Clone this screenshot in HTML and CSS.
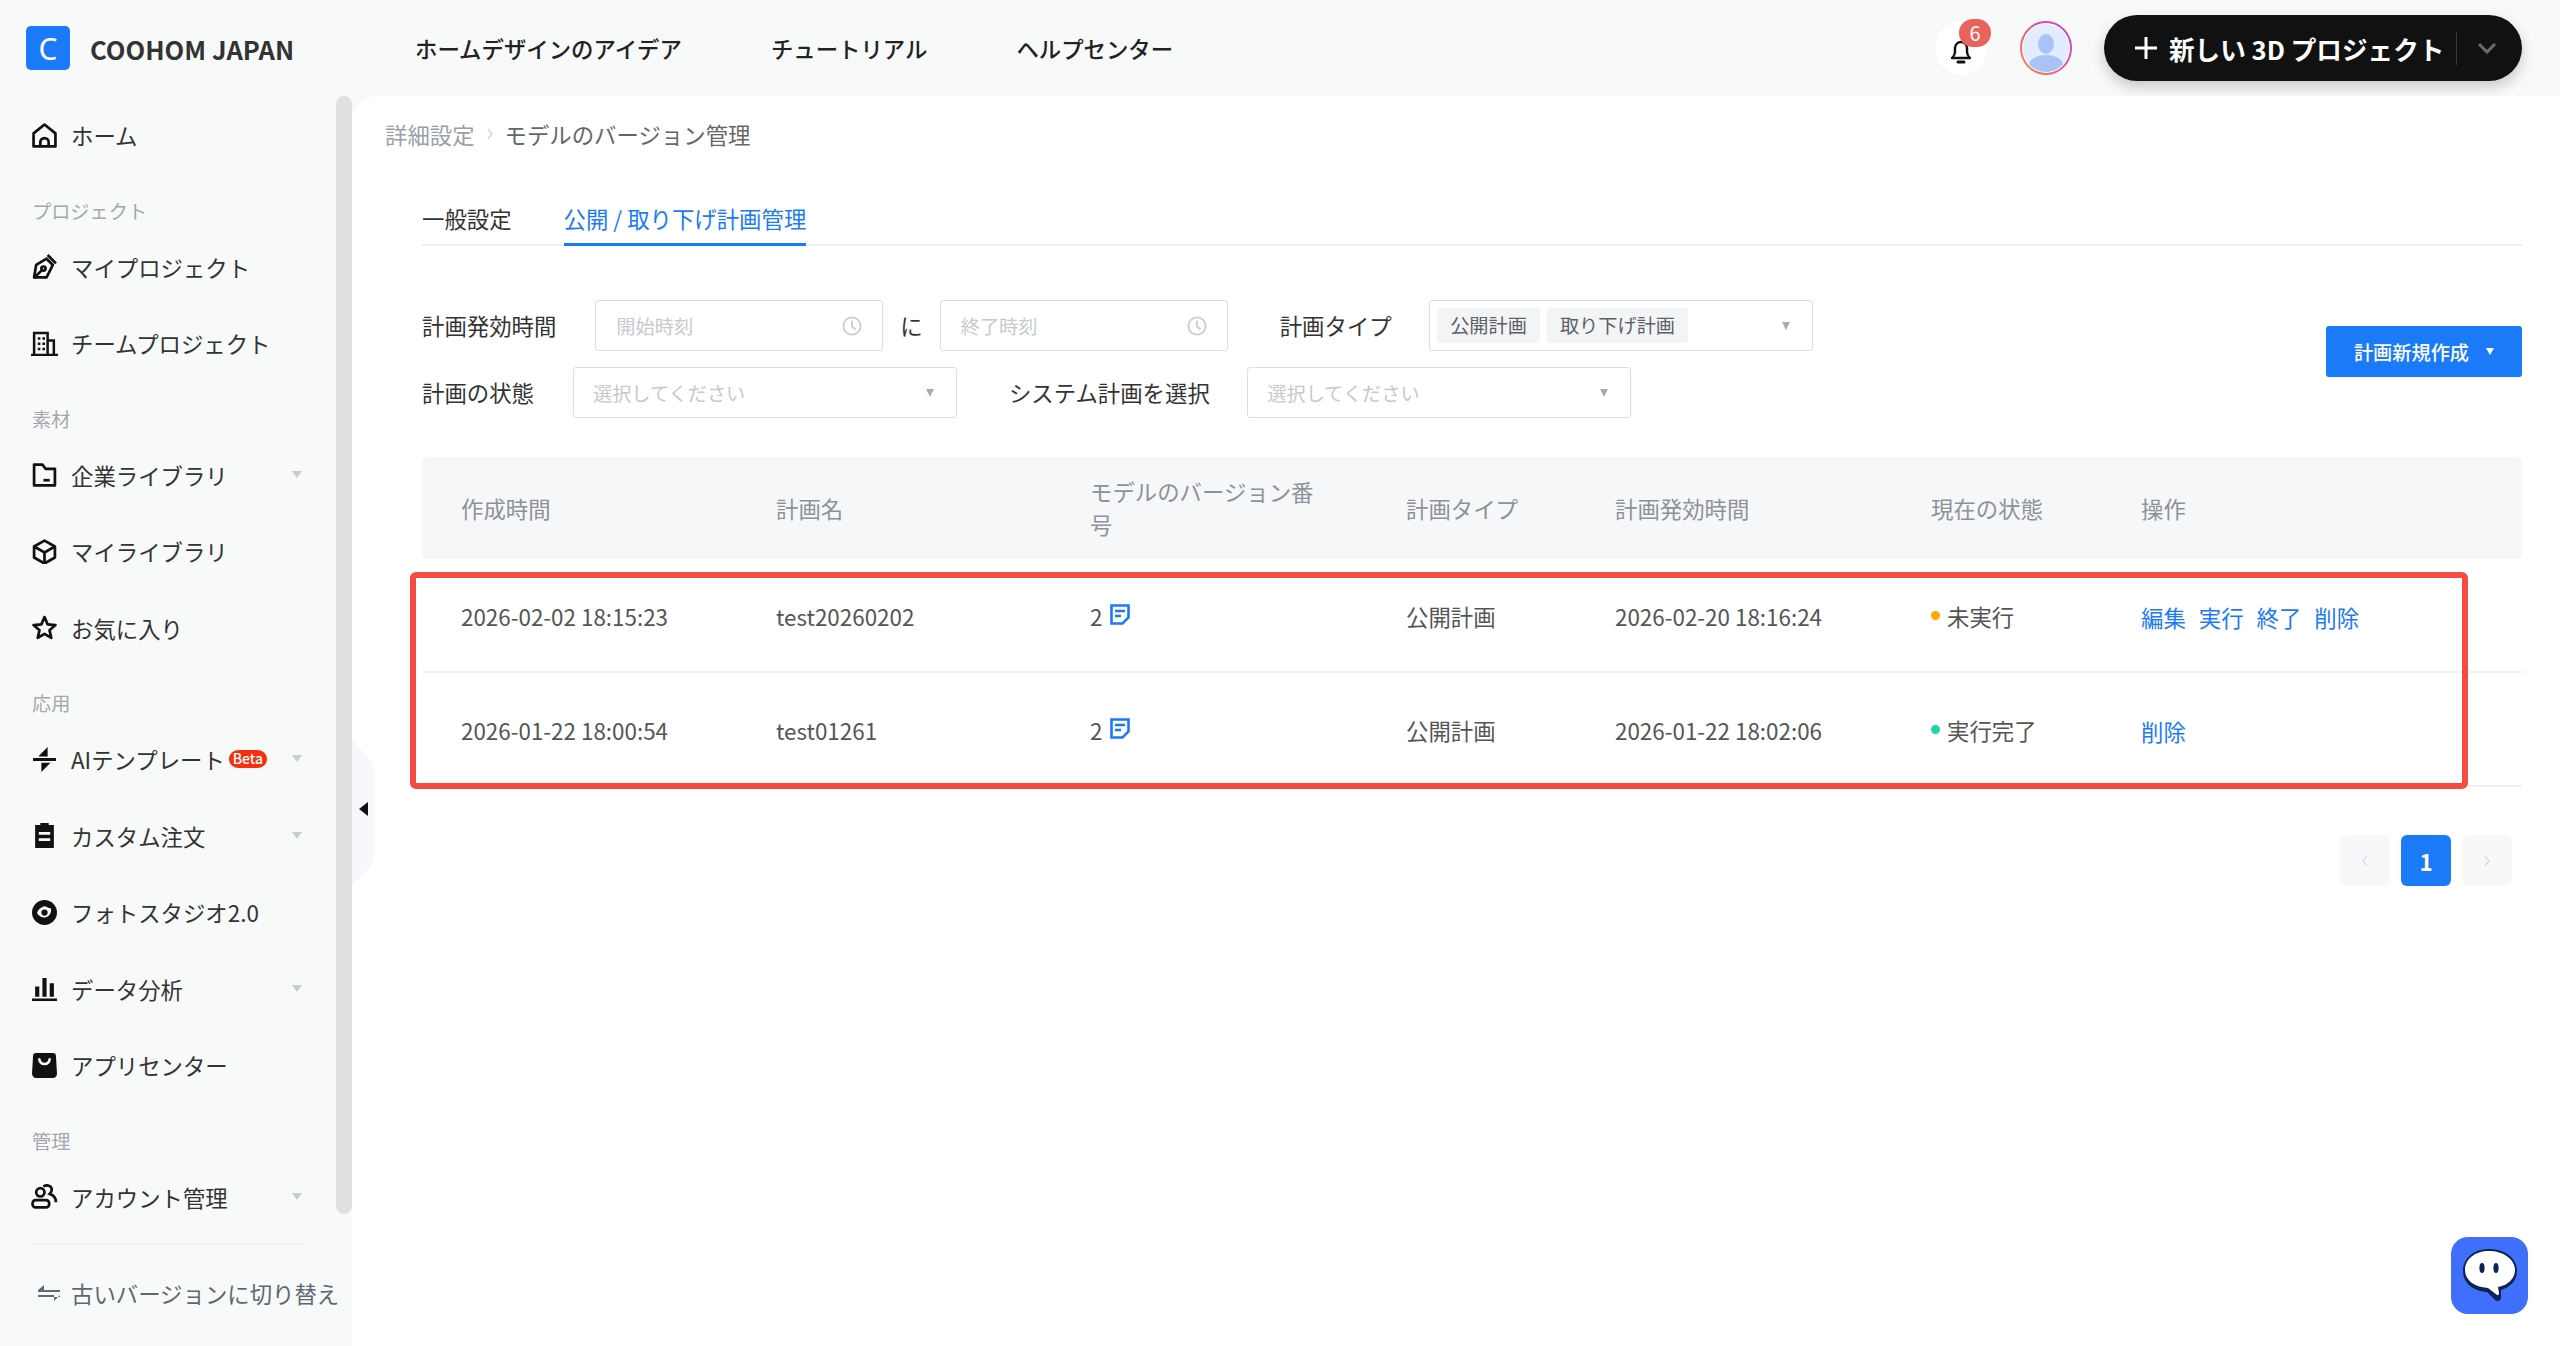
FILE: index.html
```html
<!DOCTYPE html>
<html lang="ja">

<head>
  <meta charset="UTF-8">
  <title>モデルのバージョン管理</title>
  <link rel="stylesheet" href="styles.css">
</head>

<body>
  <header class="topbar">
    <div class="brand">
      <span class="brand-logo">C</span>
      <span class="brand-name">COOHOM JAPAN</span>
    </div>
    <nav class="topnav">
      <a>ホームデザインのアイデア</a>
      <a>チュートリアル</a>
      <a>ヘルプセンター</a>
    </nav>
    <div class="top-actions">
      <div class="bell">
        <svg width="24" height="26" viewBox="0 0 24 26" fill="none" stroke="#111" stroke-width="2.4">
          <path d="M3 20c2-2 3-3 3-6v-4a6 6 0 0 1 12 0v4c0 3 1 4 3 6z" stroke-linejoin="round" />
          <path d="M9 24h6" stroke-linecap="round" stroke-width="3" />
        </svg>
        <span class="bell-badge">6</span>
      </div>
      <svg class="avatar" width="52" height="54" viewBox="0 0 52 54">
        <defs>
          <linearGradient id="ring" x1="0" y1="1" x2="1" y2="0">
            <stop offset="0" stop-color="#ff8a3c" />
            <stop offset=".5" stop-color="#f0508c" />
            <stop offset="1" stop-color="#b944e0" />
          </linearGradient>
          <clipPath id="avatar-clip">
            <ellipse cx="26" cy="27" rx="23" ry="24" />
          </clipPath>
        </defs>
        <ellipse cx="26" cy="27" rx="25" ry="26" fill="#fff" stroke="url(#ring)" stroke-width="2" />
        <g clip-path="url(#avatar-clip)">
          <rect width="52" height="54" fill="#e2ecff" />
          <ellipse cx="26" cy="23" rx="8" ry="10" fill="#a9c3f8" />
          <ellipse cx="26" cy="44" rx="17" ry="10" fill="#a9c3f8" />
        </g>
      </svg>
      <button class="new-project">
        <svg width="24" height="24" viewBox="0 0 24 24" stroke="#fff" stroke-width="3">
          <path d="M12 1v22M1 12h22" />
        </svg>
        <span class="new-project-text">新しい 3D プロジェクト</span>
        <span class="new-project-sep"></span>
        <svg width="20" height="12" viewBox="0 0 20 12" fill="none" stroke="#6b6b6b" stroke-width="3">
          <path d="M2 2l8 8 8-8" />
        </svg>
      </button>
    </div>
  </header>

  <div class="layout">
    <aside class="sidebar">
      <div class="side-inner">
        <nav class="side-nav">
          <a class="side-item">
            <svg class="side-icon" viewBox="0 0 24 24" fill="none" stroke="#111" stroke-width="2.6">
              <path d="M1.500 22.500V10L12 1.500 22.500 10v12.500z" stroke-linejoin="round" />
              <path d="M8 22.500v-4a4 4 0 0 1 8 0v4" />
            </svg>
            ホーム
          </a>

          <div class="side-label">プロジェクト</div>
          <a class="side-item">
            <svg class="side-icon" viewBox="0 0 24 24" fill="none" stroke="#111" stroke-width="2.6">
              <path d="M2 22.500l2-12 10-6 6 6-6 12z" stroke-linejoin="round" />
              <path d="M15 1l8 8M2 23l7-7" />
              <circle cx="11" cy="14" r="2" />
            </svg>
            マイプロジェクト
          </a>
          <a class="side-item">
            <svg class="side-icon wide" viewBox="0 0 26 24" fill="none" stroke="#111" stroke-width="2.4">
              <path d="M3 23V2h13v21M16 9h6v14M0 23h26" />
              <path d="M6.500 6h2.500v2.500H6.500zM11 6h2.500v2.500H11zM6.500 11h2.500v2.500H6.500zM11 11h2.500v2.500H11zM6.500 16h2.500v2.500H6.500zM11 16h2.500v2.500H11z" fill="#111" stroke="none" />
            </svg>
            チームプロジェクト
          </a>

          <div class="side-label">素材</div>
          <a class="side-item">
            <svg class="side-icon" viewBox="0 0 24 24" fill="none" stroke="#111" stroke-width="2.6">
              <path d="M2 22.500V2.500h8l3 4h9v16z" stroke-linejoin="round" />
              <path d="M11 17.500h6" />
            </svg>
            企業ライブラリ
            <span class="side-caret"></span>
          </a>
          <a class="side-item">
            <svg class="side-icon" viewBox="0 0 24 24" fill="none" stroke="#111" stroke-width="2.6">
              <path d="M12 1.500l10 5.700v10.600l-10 5.700-10-5.700V7.200z" stroke-linejoin="round" />
              <path d="M2 7.200l10 5.800 10-5.800M12 13v10.500" />
            </svg>
            マイライブラリ
          </a>
          <a class="side-item">
            <svg class="side-icon" viewBox="0 0 24 24" fill="none" stroke="#111" stroke-width="2.6">
              <path d="M12 2l3 7 7.500.7-5.700 5 1.700 7.300-6.500-3.900L5.500 22l1.700-7.300-5.700-5L9 9z" stroke-linejoin="round" />
            </svg>
            お気に入り
          </a>

          <div class="side-label">応用</div>
          <a class="side-item">
            <svg class="side-icon" viewBox="0 0 24 24" fill="#111">
              <path d="M15 0v9H6zM1 10.500h22v3H1zM9 24v-9h9z" />
            </svg>
            AIテンプレート<span class="beta">Beta</span>
            <span class="side-caret"></span>
          </a>
          <a class="side-item">
            <svg class="side-icon" viewBox="0 0 24 24">
              <path d="M3 3h5V1h8v2h5v23H3z" fill="#111" transform="translate(0 -1)" />
              <path d="M6.500 10h11M6.500 16h11" stroke="#f8fafa" stroke-width="2.500" />
            </svg>
            カスタム注文
            <span class="side-caret"></span>
          </a>
          <a class="side-item">
            <svg class="side-icon" viewBox="0 0 24 24">
              <circle cx="12" cy="12" r="12" fill="#111" />
              <path d="M5 13c0-3 3-6 7-7 2 0 3 2 6 2 1 3 0 5-2 7-3 3-8 2-11-2z" fill="#f8fafa" />
              <circle cx="12" cy="12" r="3" fill="#111" />
            </svg>
            フォトスタジオ2.0
          </a>
          <a class="side-item">
            <svg class="side-icon" viewBox="0 0 24 24" fill="#111">
              <path d="M3 10h4v10H3zM10 2h4v18h-4zM17 7h4v13h-4zM0 21.500h24V24H0z" />
            </svg>
            データ分析
            <span class="side-caret"></span>
          </a>
          <a class="side-item">
            <svg class="side-icon" viewBox="0 0 24 24">
              <path d="M4 0h16a3 3 0 0 1 3 3l1 17a4 4 0 0 1-4 4H4a4 4 0 0 1-4-4L1 3a3 3 0 0 1 3-3z" fill="#111" />
              <path d="M7 6c1 6 9 6 10 0" fill="none" stroke="#f8fafa" stroke-width="2.400" stroke-linecap="round" />
            </svg>
            アプリセンター
          </a>

          <div class="side-label">管理</div>
          <a class="side-item">
            <svg class="side-icon wide" viewBox="0 0 26 24" fill="none" stroke="#111" stroke-width="2.600">
              <circle cx="9" cy="8" r="4" />
              <rect x="1.500" y="15.500" width="16" height="7" rx="3" />
              <path d="M12 2.500c3-2.500 8-1 8 3 0 2-1 3-2 4 3 1 6 3 6 8" />
            </svg>
            アカウント管理
            <span class="side-caret"></span>
          </a>
        </nav>
        <div class="side-footer">
          <svg class="swap-icon" width="22" height="16" viewBox="0 0 22 16" fill="#626a75">
            <path d="M0 5h22v2H0zM6 0v5H0zM0 10h22v2H0zM16 10v6l6-6z" />
          </svg>
          古いバージョンに切り替え
        </div>
      </div>
      <div class="side-scroll"></div>
    </aside>

    <main class="main">
      <svg class="collapse" width="24" height="146" viewBox="0 0 24 146">
        <path d="M0 0c8 10 23 18 23 36v74c0 18-15 26-23 36z" fill="#f7f8fb" />
        <path d="M7 69l9-7v14z" fill="#111" />
      </svg>

      <div class="crumbs">
        <span class="crumb-parent">詳細設定</span>
        <svg class="crumb-sep" width="6" height="12" viewBox="0 0 6 12" fill="none" stroke="#c8cbd0" stroke-width="1.200">
          <path d="M1 1l4 5-4 5" />
        </svg>
        <span class="crumb-current">モデルのバージョン管理</span>
      </div>

      <div class="panel">
        <div class="tabs">
          <a class="tab">一般設定</a>
          <a class="tab active">公開 / 取り下げ計画管理</a>
        </div>

        <div class="toolbar">
          <div class="filters">
            <div class="filter-row">
              <label class="filter-label">計画発効時間</label>
              <div class="control time">
                <span class="placeholder">開始時刻</span>
                <svg class="clock" width="20" height="20" viewBox="0 0 20 20" fill="none" stroke="#c9ccd1" stroke-width="1.800">
                  <circle cx="10" cy="10" r="8.600" />
                  <path d="M10 4.500v6l3.500 3" />
                </svg>
              </div>
              <span class="range-sep">に</span>
              <div class="control time">
                <span class="placeholder">終了時刻</span>
                <svg class="clock" width="20" height="20" viewBox="0 0 20 20" fill="none" stroke="#c9ccd1" stroke-width="1.800">
                  <circle cx="10" cy="10" r="8.600" />
                  <path d="M10 4.500v6l3.500 3" />
                </svg>
              </div>
              <label class="filter-label next">計画タイプ</label>
              <div class="control select tagged">
                <span class="tag">公開計画</span>
                <span class="tag">取り下げ計画</span>
                <span class="select-caret"></span>
              </div>
            </div>
            <div class="filter-row">
              <label class="filter-label">計画の状態</label>
              <div class="control select">
                <span class="placeholder">選択してください</span>
                <span class="select-caret"></span>
              </div>
              <label class="filter-label next">システム計画を選択</label>
              <div class="control select">
                <span class="placeholder">選択してください</span>
                <span class="select-caret"></span>
              </div>
            </div>
          </div>
          <button class="create-btn">計画新規作成<span class="create-caret"></span></button>
        </div>

        <div class="table-wrap">
          <table class="plans">
            <colgroup>
              <col class="c-created">
              <col class="c-name">
              <col class="c-version">
              <col class="c-type">
              <col class="c-time">
              <col class="c-status">
              <col>
            </colgroup>
            <thead>
              <tr>
                <th>作成時間</th>
                <th>計画名</th>
                <th>モデルのバージョン番号</th>
                <th>計画タイプ</th>
                <th>計画発効時間</th>
                <th>現在の状態</th>
                <th>操作</th>
              </tr>
            </thead>
            <tbody>
              <tr>
                <td>2026-02-02 18:15:23</td>
                <td>test20260202</td>
                <td>
                  <span class="version">2
                    <svg class="doc" width="20" height="21" viewBox="0 0 20 21" fill="none" stroke="#1a7af8" stroke-width="2.600">
                      <path d="M1.500 1.500h17v12l-6 6h-11z" />
                      <path d="M5 7h10M5 12h6" />
                    </svg>
                  </span>
                </td>
                <td>公開計画</td>
                <td>2026-02-20 18:16:24</td>
                <td><span class="dot pending"></span>未実行</td>
                <td class="ops"><a>編集</a><a>実行</a><a>終了</a><a>削除</a></td>
              </tr>
              <tr>
                <td>2026-01-22 18:00:54</td>
                <td>test01261</td>
                <td>
                  <span class="version">2
                    <svg class="doc" width="20" height="21" viewBox="0 0 20 21" fill="none" stroke="#1a7af8" stroke-width="2.600">
                      <path d="M1.500 1.500h17v12l-6 6h-11z" />
                      <path d="M5 7h10M5 12h6" />
                    </svg>
                  </span>
                </td>
                <td>公開計画</td>
                <td>2026-01-22 18:02:06</td>
                <td><span class="dot done"></span>実行完了</td>
                <td class="ops"><a>削除</a></td>
              </tr>
            </tbody>
          </table>
          <div class="highlight"></div>
        </div>

        <div class="pager">
          <span class="page-btn">
            <svg width="6" height="12" viewBox="0 0 6 12" fill="none" stroke="#d2d5da" stroke-width="1.200"><path d="M5 1L1 6l4 5" /></svg>
          </span>
          <span class="page-btn current">1</span>
          <span class="page-btn">
            <svg width="6" height="12" viewBox="0 0 6 12" fill="none" stroke="#d2d5da" stroke-width="1.200"><path d="M1 1l4 5-4 5" /></svg>
          </span>
        </div>
      </div>

      <div class="chat">
        <svg width="60" height="58" viewBox="0 0 60 58">
          <path d="M29 2C14 2 3 11 3 24c0 12 10 20 24 21l8 8c2 2 6 1 6-2v-8c10-3 16-10 16-19C57 11 45 2 29 2z" fill="#0d2354" />
          <path d="M29 4C15 4 5 12 5 23c0 10 9 17 23 18l9 7c1 0 2 0 2-2l-1-6c11-2 17-9 17-17C55 12 43 4 29 4z" fill="#fff" />
          <ellipse cx="22" cy="21" rx="2.600" ry="5" fill="#0d2354" />
          <ellipse cx="36" cy="21" rx="2.600" ry="5" fill="#0d2354" />
        </svg>
      </div>
    </main>
  </div>
</body>

</html>
```

FILE: styles.css
```css
* {
  box-sizing: border-box;
}

html,
body {
  margin: 0;
  height: 100%;
  overflow: hidden;
}

body {
  display: flex;
  flex-direction: column;
  background: #f8fafa;
  color: #333;
  font-family: "Noto Sans CJK JP", "Noto Sans", sans-serif;
  font-size: 22.400px;
}

/* top bar */
.topbar {
  display: flex;
  align-items: center;
  flex: none;
  height: 96px;
  padding: 0 38px 0 26px;
}

.brand {
  display: flex;
  align-items: center;
  width: 389px;
}

.brand-logo {
  display: flex;
  align-items: center;
  justify-content: center;
  width: 44px;
  height: 44px;
  margin-right: 20px;
  border-radius: 5px;
  background: #1a7af8;
  color: #fff;
  font-size: 30px;
  font-family: "Noto Sans", sans-serif;
  font-weight: 400;
}

.brand-name {
  color: #333;
  font-size: 25.600px;
  font-weight: 700;
  white-space: nowrap;
}

.topnav {
  display: flex;
  gap: 89px;
  color: #222;
  font-weight: 500;
}

.top-actions {
  display: flex;
  align-items: center;
  margin-left: auto;
}

.bell {
  position: relative;
  display: flex;
  align-items: center;
  justify-content: center;
  width: 52px;
  height: 54px;
  padding-top: 6px;
  border-radius: 50%;
  background: #fff;
}

.bell-badge {
  position: absolute;
  top: -2px;
  left: 24px;
  width: 32px;
  height: 28px;
  border-radius: 14px;
  background: #e8635b;
  color: #fff;
  font-size: 20px;
  line-height: 27px;
  text-align: center;
}

.avatar {
  margin: 0 32px 0 33px;
}

.new-project {
  display: flex;
  align-items: center;
  width: 418px;
  height: 66px;
  padding: 0 0 0 30px;
  border: none;
  border-radius: 33px;
  background: #111;
  box-shadow: 0 6px 14px rgba(0, 0, 0, .2);
  color: #fff;
  font-family: inherit;
}

.new-project-text {
  margin-left: 11px;
  font-size: 25.600px;
  font-weight: 700;
  white-space: nowrap;
}

.new-project-sep {
  width: 1px;
  height: 33px;
  margin: 0 20px 0 12px;
  background: #3a3a3a;
}

/* sidebar */
.layout {
  display: flex;
  flex: 1;
  min-height: 0;
}

.sidebar {
  display: flex;
  flex: none;
  width: 352px;
}

.side-inner {
  flex: none;
  width: 336px;
  padding-top: 1px;
}

.side-scroll {
  flex: none;
  width: 16px;
  height: 1118px;
  border-radius: 8px;
  background: #dfe0e2;
}

.side-item {
  display: flex;
  align-items: center;
  height: 76.500px;
  padding: 0 34px 0 32px;
  color: #333;
  white-space: nowrap;
}

.side-icon {
  flex: none;
  width: 25px;
  height: 25px;
  margin-right: 14px;
}

.side-icon.wide {
  width: 27px;
  margin-left: -1px;
  margin-right: 13px;
}

.side-label {
  height: 36px;
  margin-top: 19px;
  padding-left: 32px;
  color: #a4a8ae;
  font-size: 19.200px;
  line-height: 36px;
}

.side-caret {
  width: 0;
  height: 0;
  margin-left: auto;
  margin-bottom: 1px;
  border-style: solid;
  border-width: 7px 5px 0;
  border-color: #c9ccd1 transparent transparent;
}

.beta {
  width: 38px;
  height: 18px;
  margin-left: 4px;
  border-radius: 9px;
  background: #f5300f;
  color: #fff;
  font-size: 14px;
  font-weight: 500;
  line-height: 17px;
  text-align: center;
}

.side-footer {
  display: flex;
  align-items: center;
  gap: 11px;
  width: 272px;
  height: 98px;
  margin: 8px 0 0 32px;
  padding-left: 6px;
  border-top: 2px solid #eeeff0;
  color: #5f6773;
  white-space: nowrap;
}

.swap-icon {
  flex: none;
}

/* main */
.main {
  position: relative;
  flex: 1;
  padding: 0 38px 0 33px;
  border-top-left-radius: 24px;
  background: #fff;
}

.collapse {
  position: absolute;
  top: 644px;
  left: 0;
}

.crumbs {
  display: flex;
  align-items: center;
  height: 78px;
  padding-bottom: 3px;
  color: #666;
}

.crumb-parent {
  color: #9a9fa7;
}

.crumb-sep {
  margin: 0 12px;
}

.panel {
  padding-left: 37px;
}

.tabs {
  display: flex;
  gap: 52px;
  height: 54px;
  margin-top: 18px;
  border-bottom: 2px solid #eeeff1;
}

.tab {
  height: 54px;
  padding-top: 3px;
  border-bottom: 3px solid transparent;
  color: #333;
  line-height: 47px;
}

.tab.active {
  border-bottom-color: #1a7af8;
  color: #1a7af8;
}

.toolbar {
  display: flex;
  justify-content: space-between;
  margin-top: 54px;
}

.filters {
  display: flex;
  flex-direction: column;
  gap: 16px;
}

.filter-row {
  display: flex;
  align-items: center;
  height: 51px;
}

.filter-label {
  margin-right: 39px;
  padding-bottom: 2px;
  white-space: nowrap;
}

.filter-label.next {
  margin-left: 52px;
  margin-right: 37.500px;
}

.range-sep {
  padding: 0 17px 2px;
}

.control {
  display: flex;
  align-items: center;
  height: 51px;
  border: 1px solid #dcdee2;
  border-radius: 3px;
  background: #fff;
  font-size: 19.200px;
}

.control.time {
  justify-content: space-between;
  width: 288px;
  padding: 0 20px 0 20px;
}

.control.select {
  justify-content: space-between;
  width: 384px;
  padding: 0 22px 0 19px;
}

.control.tagged {
  justify-content: flex-start;
  gap: 7px;
  padding-left: 7px;
}

.placeholder {
  color: #c6c9ce;
}

.tag {
  height: 35px;
  padding: 0 13px;
  border-radius: 3px;
  background: #f3f4f6;
  color: #5c5f66;
  line-height: 34px;
  white-space: nowrap;
}

.select-caret {
  width: 0;
  height: 0;
  border-style: solid;
  border-width: 8px 4.500px 0;
  border-color: #a8abb0 transparent transparent;
}

.tagged .select-caret {
  margin-left: auto;
}

.create-btn {
  display: flex;
  align-items: center;
  justify-content: center;
  width: 196px;
  height: 51px;
  margin-top: 26px;
  padding: 0;
  border: none;
  border-radius: 3px;
  background: #1a7af8;
  color: #fff;
  font-family: inherit;
  font-size: 19.200px;
  font-weight: 500;
}

.create-caret {
  width: 0;
  height: 0;
  margin-left: 17px;
  border-style: solid;
  border-width: 7px 4px 0;
  border-color: #fff transparent transparent;
}

/* table */
.table-wrap {
  position: relative;
  margin-top: 39px;
}

.plans {
  width: 100%;
  border-spacing: 0;
  table-layout: fixed;
}

.c-created {
  width: 315px;
}

.c-name {
  width: 314px;
}

.c-version {
  width: 316px;
}

.c-type {
  width: 209px;
}

.c-time {
  width: 316px;
}

.c-status {
  width: 210px;
}

.plans th {
  height: 102px;
  padding: 0 39px;
  background: #f6f7f9;
  color: #8d9299;
  font-weight: 400;
  line-height: 33px;
  text-align: left;
}

.plans th:first-child {
  border-radius: 6px 0 0 6px;
}

.plans th:last-child {
  border-radius: 0 6px 6px 0;
}

.plans td {
  height: 114px;
  padding: 1px 39px 0;
  border-bottom: 2px solid #f0f1f2;
  color: #555;
  white-space: nowrap;
}

.version {
  display: inline-flex;
  align-items: center;
  gap: 8px;
}

.doc {
  margin-top: -2px;
}

.dot {
  display: inline-block;
  width: 9px;
  height: 9px;
  margin-right: 7px;
  border-radius: 50%;
  vertical-align: 6px;
}

.dot.pending {
  background: #ffab00;
}

.dot.done {
  background: #1fd6a8;
}

.plans td.ops {
  padding-top: 4px;
}

.ops a {
  margin-right: 13px;
  color: #1a7af8;
}

.highlight {
  position: absolute;
  top: 115px;
  left: -12px;
  width: 2058px;
  height: 217px;
  border: 6px solid #f44c43;
  border-radius: 6px;
}

.pager {
  display: flex;
  justify-content: flex-end;
  gap: 11px;
  margin: 48px 10px 0 0;
}

.page-btn {
  display: flex;
  align-items: center;
  justify-content: center;
  width: 50px;
  height: 51px;
  border-radius: 6px;
  background: #f7f8f9;
}

.page-btn.current {
  background: #1a7af8;
  color: #fff;
  font-weight: 700;
}

.chat {
  position: absolute;
  right: 32px;
  bottom: 32px;
  display: flex;
  align-items: center;
  justify-content: center;
  width: 77px;
  height: 77px;
  border-radius: 17px;
  background: #3f6ffb;
}
```
